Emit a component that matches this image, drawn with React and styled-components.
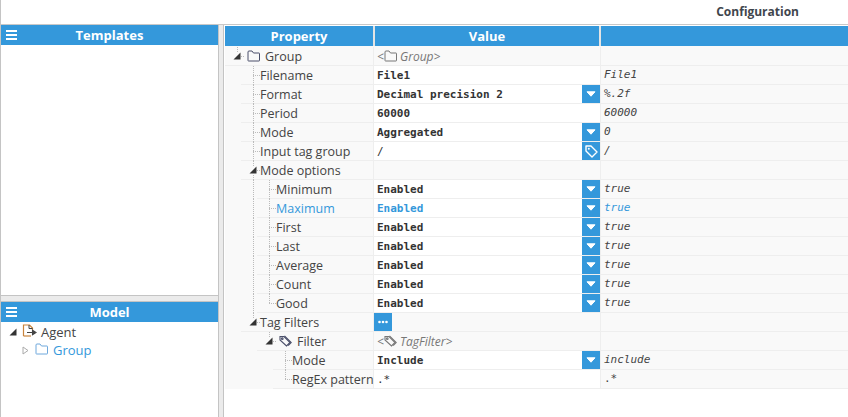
import styled, { createGlobalStyle } from 'styled-components';

const Global = createGlobalStyle`
  html, body { margin: 0; padding: 0; background: #fff; }
  #root { height: 417px; overflow: hidden; }
  * { box-sizing: border-box; }
`;

const Page = styled.div`
  width: 848px;
  height: 417px;
  display: flex;
  flex-direction: column;
  border-left: 1px solid #c4c4c4;
  font-family: 'Open Sans', sans-serif;
  color: #444;
  overflow: hidden;
`;

const TopBar = styled.div`
  height: 25px;
  flex: none;
  display: flex;
  justify-content: flex-end;
  align-items: center;
  padding: 0 49px 1px 0;
  border-bottom: 1px solid #c8c8c8;
  font-size: 12px;
  font-weight: 700;
  color: #3f464d;
`;

const Main = styled.div`
  flex: 1;
  display: flex;
  min-height: 0;
`;

const Sidebar = styled.div`
  width: 217px;
  flex: none;
  display: flex;
  flex-direction: column;
`;

const Pane = styled.div`
  display: flex;
  flex-direction: column;
  flex: ${(p) => (p.$grow ? 1 : 'none')};
  height: ${(p) => (p.$grow ? 'auto' : '270px')};
  min-height: 0;
`;

const PaneSplit = styled.div`
  height: 7px;
  flex: none;
  background: #ebebeb;
  border-top: 1px solid #c4c4c4;
  border-bottom: 1px solid #c4c4c4;
`;

const Split = styled.div`
  width: 6px;
  flex: none;
  background: #ebebeb;
  border-left: 1px solid #c4c4c4;
  border-right: 1px solid #c4c4c4;
`;

const PaneHead = styled.div`
  height: 20px;
  flex: none;
  position: relative;
  background: #3498db;
  color: #fff;
  font-size: 13px;
  font-weight: 700;
  line-height: 20px;
  text-align: center;
`;

const Burger = styled.svg`
  position: absolute;
  left: 5px;
  top: 4px;
`;

const TreeList = styled.div`
  padding-top: 1px;
  font-size: 13px;
`;

const TreeRow = styled.div`
  height: 18px;
  display: flex;
  align-items: center;
  padding-left: ${(p) => p.$indent}px;
  color: ${(p) => (p.$active ? '#3498db' : '#444')};
`;

const TreeLabel = styled.span`
  margin-left: ${(p) => p.$gap}px;
`;

const Right = styled.div`
  flex: 1;
  min-width: 0;
  padding-top: 1px;
  padding-left: 1px;
  margin-left: 0;
`;

const HeadRow = styled.div`
  display: grid;
  grid-template-columns: 148px 224px 247px;
  column-gap: 2px;
  height: 20px;
  background: #e4e4e4;
`;

const HeadCell = styled.div`
  background: #3498db;
  color: #fff;
  font-size: 13px;
  font-weight: 700;
  line-height: 20px;
  text-align: center;
`;

const Spacer = styled.div`
  height: 1px;
  background: #f9f9f9;
`;

const Row = styled.div`
  display: grid;
  grid-template-columns: 149px 227px 247px;
  height: 19px;
`;

const PropCell = styled.div`
  display: flex;
  background: #f9f9f9;
  border-right: 1px solid #eee;
`;

const IndentCol = styled.div`
  width: 16px;
  flex: none;
  ${(p) =>
    p.$guide &&
    `background: repeating-linear-gradient(to bottom, #bbb 0 1px, transparent 1px 2px) 12px 0 / 1px 100% no-repeat;`}
`;

const PropLabel = styled.div`
  flex: 1;
  min-width: 0;
  position: relative;
  display: flex;
  align-items: center;
  border-bottom: 1px solid #eee;
  padding-left: ${(p) => p.$pad}px;
  font-size: 12.5px;
  white-space: nowrap;
  color: ${(p) => (p.$active ? '#3498db' : '#444')};

  &::before {
    content: '';
    position: absolute;
    left: 12px;
    top: 0;
    width: 1px;
    height: ${(p) => (p.$last ? '9px' : '19px')};
    background: repeating-linear-gradient(to bottom, #bbb 0 1px, transparent 1px 2px);
  }

  &::after {
    content: '';
    position: absolute;
    left: 12px;
    top: 9px;
    width: 7px;
    height: 1px;
    background: repeating-linear-gradient(to right, #bbb 0 1px, transparent 1px 2px);
  }
`;

const Expander = styled.svg`
  position: absolute;
  left: 8px;
  top: 5px;
  z-index: 1;
  background: #f9f9f9;
`;

const LabelIcon = styled.span`
  display: inline-flex;
  margin-right: 5px;
  background: #f9f9f9;
  position: relative;
  z-index: 1;
`;

const ValueCell = styled.div`
  display: flex;
  align-items: center;
  height: 19px;
  background: ${(p) => (p.$plain ? '#f9f9f9' : '#fff')};
  border-bottom: 1px solid #eee;
  border-right: 1px solid #eee;
  padding-left: ${(p) => (p.$flush ? 0 : 3)}px;
`;

const ValueText = styled.span`
  flex: 1;
  font-family: 'DejaVu Sans Mono', monospace;
  font-size: 11px;
  font-weight: ${(p) => (p.$light ? 400 : 700)};
  color: ${(p) => (p.$active ? '#3498db' : '#333')};
`;

const TypeText = styled.span`
  display: flex;
  align-items: center;
  font-size: 12px;
  font-style: italic;
  color: #777;
`;

const IconButton = styled.div`
  width: 18px;
  height: 18px;
  flex: none;
  display: flex;
  align-items: center;
  justify-content: center;
  background: #3498db;
`;

const RawCell = styled.div`
  background: #f9f9f9;
  border-bottom: 1px solid #eee;
  padding-left: 3px;
  font-family: 'DejaVu Sans Mono', monospace;
  font-size: 11px;
  line-height: 18px;
  font-style: ${(p) => (p.$upright ? 'normal' : 'italic')};
  color: ${(p) => (p.$active ? '#3498db' : '#444')};
`;

const Triangle = ({ open }) => (
  <Expander width="8" height="8" viewBox="0 0 8 8">
    {open ? (
      <path d="M7.5 0.5V7.5H0.5Z" fill="#333" />
    ) : (
      <path d="M1.5 0.5L6 4L1.5 7.5Z" fill="#fff" stroke="#aaa" />
    )}
  </Expander>
);

const Folder = ({ color = '#4a4f6a' }) => (
  <svg width="13" height="12" viewBox="0 0 13 12" fill="none" stroke={color} strokeWidth="1">
    <path d="M1 10.5V2a1 1 0 0 1 1-1h3l1.5 2H12a.5.5 0 0 1 .5.5v7a.5.5 0 0 1-.5.5H1.5a.5.5 0 0 1-.5-.5Z" />
  </svg>
);

const Tag = ({ color = '#4a4f6a' }) => (
  <svg width="13" height="13" viewBox="0 0 13 13" fill="none" stroke={color} strokeWidth="1.1">
    <path d="M1 1.5h4l6 6-3.5 3.5-6.5-6Z" />
    <path d="M5.5 0.8l6.7 6.7-3 3" />
    <circle cx="3.3" cy="3.7" r="0.8" />
  </svg>
);

const AgentIcon = () => (
  <svg width="15" height="13" viewBox="0 0 15 13" fill="none">
    <path d="M1.5 12V1h6l3 3v2" stroke="#c8843c" strokeWidth="1.2" />
    <path d="M1.5 12H9" stroke="#c8843c" strokeWidth="1.2" />
    <path d="M7 1v3.5h3.5" stroke="#444" strokeWidth="1" />
    <path d="M5 8.5h7M10.5 6.2L14 8.5l-3.500 2.300Z" stroke="#444" strokeWidth="1.100" fill="#444" />
  </svg>
);

const Chevron = () => (
  <svg width="10" height="6" viewBox="0 0 10 6">
    <path d="M1 .8h8L5 5.2Z" fill="#fff" stroke="#fff" strokeLinejoin="round" />
  </svg>
);

const TagButton = () => (
  <svg width="13" height="13" viewBox="0 0 13 13" fill="none" stroke="#fff" strokeWidth="1.400">
    <path d="M1 1h5l6 6-5 5-6-6Z" strokeLinejoin="round" />
    <circle cx="3.800" cy="3.800" r="1" fill="#fff" stroke="none" />
  </svg>
);

const Dots = () => (
  <svg width="10" height="4" viewBox="0 0 10 4" fill="#fff">
    <circle cx="1.500" cy="2" r="1.300" />
    <circle cx="5" cy="2" r="1.300" />
    <circle cx="8.500" cy="2" r="1.300" />
  </svg>
);

const BurgerIcon = () => (
  <Burger width="12" height="12" viewBox="0 0 12 12" fill="#fff">
    <rect x="0" y="1" width="11" height="2" />
    <rect x="0" y="5" width="11" height="2" />
    <rect x="0" y="9" width="11" height="2" />
  </Burger>
);

const modeRow = (name, active) => ({
  name,
  depth: 2,
  guides: [1],
  value: 'Enabled',
  raw: 'true',
  button: 'select',
  active,
});

const rows = [
  { name: 'Group', depth: 0, guides: [], open: true, icon: 'folder', type: 'Group', last: true },
  { name: 'Filename', depth: 1, guides: [], value: 'File1', raw: 'File1' },
  { name: 'Format', depth: 1, guides: [], value: 'Decimal precision 2', raw: '%.2f', button: 'select' },
  { name: 'Period', depth: 1, guides: [], value: '60000', raw: '60000' },
  { name: 'Mode', depth: 1, guides: [], value: 'Aggregated', raw: '0', button: 'select' },
  { name: 'Input tag group', depth: 1, guides: [], value: '/', raw: '/', button: 'tag', light: true },
  { name: 'Mode options', depth: 1, guides: [], open: true },
  modeRow('Minimum'),
  modeRow('Maximum', true),
  modeRow('First'),
  modeRow('Last'),
  modeRow('Average'),
  modeRow('Count'),
  { ...modeRow('Good'), last: true },
  { name: 'Tag Filters', depth: 1, guides: [], open: true, last: true, button: 'dots', plain: true },
  { name: 'Filter', depth: 2, guides: [], open: true, icon: 'tag', type: 'TagFilter', last: true },
  { name: 'Mode', depth: 3, guides: [], value: 'Include', raw: 'include', button: 'select' },
  { name: 'RegEx pattern', depth: 3, guides: [], value: '.*', raw: '.*', light: true, last: true, upright: true },
];

const PropertyRow = ({ row }) => {
  const hasExpander = row.open;
  const columns = Array.from({ length: row.depth }, (_, i) => i);
  const pad = row.icon ? 22 : 19;
  return (
    <Row>
      <PropCell>
        {columns.map((i) => (
          <IndentCol key={i} $guide={row.guides.includes(i)} />
        ))}
        <PropLabel $pad={pad} $last={row.last} $active={row.active}>
          {hasExpander && <Triangle open />}
          {row.icon && (
            <LabelIcon>{row.icon === 'folder' ? <Folder /> : <Tag />}</LabelIcon>
          )}
          {row.name}
        </PropLabel>
      </PropCell>
      {row.type ? (
        <ValueCell $plain>
          <TypeText>
            &lt;{row.icon === 'folder' ? <Folder color="#777" /> : <Tag color="#777" />}&nbsp;
            {row.type}&gt;
          </TypeText>
        </ValueCell>
      ) : (
        <ValueCell $plain={!row.value} $flush={row.button === 'dots'}>
          {row.value && (
            <ValueText $active={row.active} $light={row.light}>
              {row.value}
            </ValueText>
          )}
          {row.button === 'select' && (
            <IconButton>
              <Chevron />
            </IconButton>
          )}
          {row.button === 'tag' && (
            <IconButton>
              <TagButton />
            </IconButton>
          )}
          {row.button === 'dots' && (
            <IconButton>
              <Dots />
            </IconButton>
          )}
        </ValueCell>
      )}
      <RawCell $active={row.active} $upright={row.upright}>
        {row.raw}
      </RawCell>
    </Row>
  );
};

export default function App() {
  return (
    <>
      <Global />
      <Page>
        <TopBar>Configuration</TopBar>
        <Main>
          <Sidebar>
            <Pane $grow>
              <PaneHead>
                <BurgerIcon />
                Templates
              </PaneHead>
            </Pane>
            <PaneSplit />
            <Pane style={{ height: 115 }}>
              <PaneHead>
                <BurgerIcon />
                Model
              </PaneHead>
              <TreeList>
                <TreeRow $indent={8}>
                  <svg width="8" height="8" viewBox="0 0 8 8">
                    <path d="M7.500 0.500V7.500H0.500Z" fill="#333" />
                  </svg>
                  <TreeLabel $gap={5}>
                    <AgentIcon />
                  </TreeLabel>
                  <TreeLabel $gap={4}>Agent</TreeLabel>
                </TreeRow>
                <TreeRow $indent={21} $active>
                  <svg width="7" height="9" viewBox="0 0 7 9">
                    <path d="M1 1L6 4.500L1 8Z" fill="#fff" stroke="#aaa" />
                  </svg>
                  <TreeLabel $gap={6}>
                    <Folder color="#6fa8dc" />
                  </TreeLabel>
                  <TreeLabel $gap={5}>Group</TreeLabel>
                </TreeRow>
              </TreeList>
            </Pane>
          </Sidebar>
          <Split />
          <Right>
            <HeadRow>
              <HeadCell>Property</HeadCell>
              <HeadCell>Value</HeadCell>
              <HeadCell />
            </HeadRow>
            <Spacer />
            {rows.map((row, i) => (
              <PropertyRow key={i} row={row} />
            ))}
          </Right>
        </Main>
      </Page>
    </>
  );
}
